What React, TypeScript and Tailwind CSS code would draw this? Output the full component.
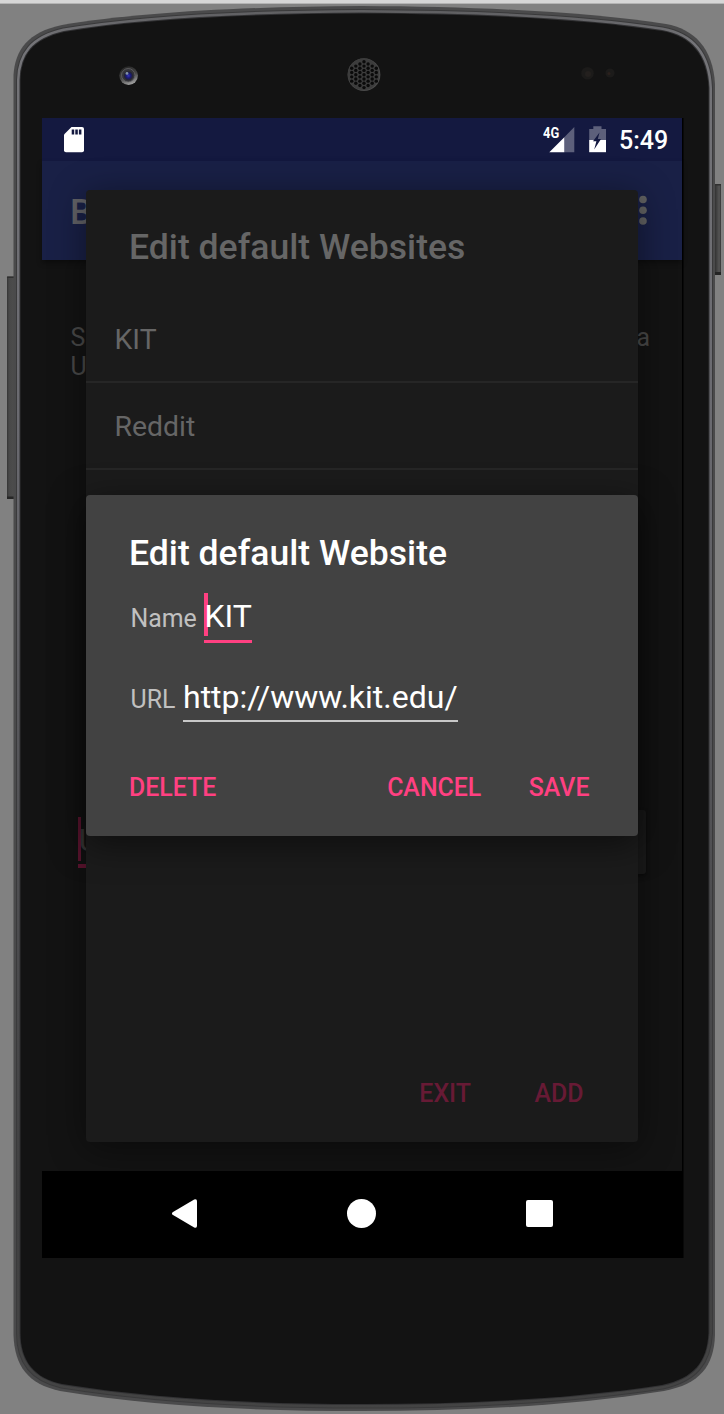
import React from "react";

const HOLES: [number, number][] = [];
for (let r = -3; r <= 3; r++) {
  const n = 7 - Math.abs(r);
  for (let c = 0; c < n; c++) {
    HOLES.push([364 + r * 4.1, 74.7 + (c - (n - 1) / 2) * 4.3]);
  }
}

const OUTLINE =
  "M13.5 75 C15 50 28 32 62 25 C140 12 250 6.5 362 6 C480 6.5 590 12 666 24 C694 29 713 48 715 84 L715 1335 C714 1366 700 1384 664 1391 C570 1406 470 1411 362 1411 C250 1411 150 1406 60 1391 C28 1384 14.5 1366 13.5 1335 Z";
const FACE =
  "M20.5 80 C21 55 33 39 64 32 C140 19 250 14 362 13.5 C480 14 585 19 662 31 C690 36 707 54 708.5 88 L708.5 1333 C707 1362 694 1378 662 1385 C570 1399 470 1404 362 1404 C250 1404 150 1398 62 1384 C34 1378 20.5 1361 20.5 1333 Z";

function PhoneBody() {
  return (
    <svg className="absolute inset-0" width="724" height="1414" viewBox="0 0 724 1414">
      <defs>
        <linearGradient id="key" x1="0" x2="1" y1="0" y2="0">
          <stop offset="0" stopColor="#343434" />
          <stop offset="0.25" stopColor="#484848" />
          <stop offset="1" stopColor="#4e4e4e" />
        </linearGradient>
        <linearGradient id="keyRight" x1="0" x2="1" y1="0" y2="0">
          <stop offset="0" stopColor="#2b2b2b" />
          <stop offset="0.75" stopColor="#555" />
          <stop offset="1" stopColor="#333" />
        </linearGradient>
        <linearGradient id="rim" gradientUnits="userSpaceOnUse" x1="0" x2="0" y1="0" y2="1414">
          <stop offset="0" stopColor="#58585a" />
          <stop offset="0.03" stopColor="#747478" />
          <stop offset="0.3" stopColor="#6a6a70" />
          <stop offset="0.6" stopColor="#505053" />
          <stop offset="0.85" stopColor="#404041" />
          <stop offset="1" stopColor="#444" />
        </linearGradient>
        <linearGradient id="lensRing" x1="0.3" x2="0.7" y1="0" y2="1">
          <stop offset="0" stopColor="#252525" />
          <stop offset="0.5" stopColor="#444" />
          <stop offset="1" stopColor="#aaa" />
        </linearGradient>
        <radialGradient id="lens">
          <stop offset="0" stopColor="#3434b8" />
          <stop offset="0.55" stopColor="#191970" />
          <stop offset="1" stopColor="#252528" />
        </radialGradient>
      </defs>
      <rect x="0" y="0" width="724" height="3" fill="#d6d6d6" />
      <rect x="0" y="3" width="724" height="1" fill="#b4b4b4" />
      <rect x="7" y="276.5" width="8" height="222.5" rx="1" fill="url(#key)" />
      <rect x="7" y="276.5" width="7" height="1.5" fill="#303030" />
      <rect x="7" y="496.5" width="7" height="2.5" fill="#262626" />
      <rect x="714" y="184" width="7" height="91" rx="1" fill="url(#keyRight)" />
      <rect x="714" y="184" width="7" height="1.5" fill="#303030" />
      <rect x="714" y="272" width="7" height="3" fill="#242424" />
      <path d={OUTLINE} fill="#4a4a4b" />
      <path d={FACE} fill="none" stroke="#3a3a3b" strokeWidth="9" />
      <path d={FACE} fill="none" stroke="url(#rim)" strokeWidth="7" />
      <path d={FACE} fill="none" stroke="#323234" strokeWidth="2" />
      <path d={FACE} fill="#131313" />
      <circle cx="128.6" cy="75.6" r="9.3" fill="url(#lensRing)" />
      <circle cx="128.2" cy="75.2" r="6.7" fill="#34343a" stroke="#6a6a6c" strokeWidth="0.7" />
      <circle cx="128.4" cy="75.7" r="4.5" fill="url(#lens)" />
      <circle cx="127" cy="73.4" r="1.4" fill="#8393a6" />
      <circle cx="364" cy="74.7" r="16.4" fill="#4a4a4a" />
      <circle cx="363.5" cy="74.3" r="15.8" fill="#3c3c3c" />
      {HOLES.map(([x, y], i) => (
        <circle key={i} cx={x} cy={y} r="1.7" fill="#0a0a0a" />
      ))}
      <circle cx="587.5" cy="73.3" r="6.3" fill="#1c1b1a" />
      <circle cx="588" cy="74" r="3" fill="#24201e" />
      <circle cx="610" cy="73" r="4.6" fill="#1c1b1a" />
      <circle cx="609" cy="73.5" r="1.5" fill="#2b201d" />
    </svg>
  );
}

function StatusBar() {
  return (
    <div className="flex h-[43px] w-[640px] items-start bg-[#141940] text-white">
      <svg className="ml-[22px] mt-[9px]" width="20" height="26" viewBox="0 0 20 26">
        <path d="M7.5 0 H18 Q20 0 20 2 V23.3 Q20 25.3 18 25.3 H2 Q0 25.3 0 23.3 V7.5 Z" fill="#fff" />
        <path d="M7.7 2.5h2.5v5H7.7z M11.3 2.5h2.5v5h-2.5z M14.9 2.5h2.5v5h-2.5z" fill="#141940" />
      </svg>
      <div className="ml-[458.5px] mt-[6px] flex">
        <span className="w-[15.5px] origin-left scale-x-[0.86] text-[15px] font-bold leading-[18px]">4G</span>
        <svg className="-ml-[9.5px] mt-[3px]" width="26" height="26" viewBox="0 0 26 26">
          <path d="M15.3 10.2 L25.3 0 V25.3 H15.3 Z" fill="#5d607b" />
          <path d="M0.3 25.3 L15.3 10.2 V25.3 Z" fill="#fff" />
        </svg>
      </div>
      <svg className="ml-[14.5px] mt-[8px]" width="17" height="27" viewBox="0 0 17 27">
        <path d="M4.3 0.3 H12.5 V3 H17 V14 H0.2 V3 H4.3 Z" fill="#5d607b" />
        <path d="M0.2 14 H17 V26.2 H0.2 Z" fill="#fff" />
        <path d="M10.5 6.5 L4 15.3 H7.4 L5.2 23.5 L12 13.1 H8.8 Z" fill="#141940" />
      </svg>
      <span className="ml-[13px] mt-[8px] text-[25px] font-medium leading-[30px]">5:49</span>
    </div>
  );
}

function AppBar() {
  return (
    <div className="z-10 flex h-[99px] w-[640px] items-start justify-between bg-[#192046] shadow-[0_3px_5px_rgba(0,0,0,0.35)]">
      <span className="ml-[28px] mt-[30px] text-[35.6px] font-medium leading-[42px] text-[#626266]">B</span>
      <svg className="mr-[35px] mt-[34px]" width="8" height="31" viewBox="0 0 8 31">
        <circle cx="4" cy="4.5" r="3.8" fill="#626262" />
        <circle cx="4" cy="15.2" r="3.8" fill="#626262" />
        <circle cx="4" cy="26" r="3.8" fill="#626262" />
      </svg>
    </div>
  );
}

function MainPage() {
  return (
    <div className="h-[911px] w-[640px] overflow-hidden bg-[#131313] text-[#484848]">
      <div className="flex h-[490px] justify-between px-7 pt-[63px] text-[24.9px] leading-[29px]">
        <p className="ml-[0.5px]">
          S<br />U
        </p>
        <p className="mr-[4px]">a</p>
      </div>
      <div className="flex justify-between pl-[35.7px] pr-9 pt-[60px]">
        <div className="flex h-[58px] w-[50px] flex-col justify-between">
          <div className="mt-[7px] flex h-[44px] border-l-[3px] border-[#641633] text-[32px] leading-[46px] text-[#3c3c3c]">
            <span className="-ml-[2px]">U</span>
          </div>
          <div className="h-1 bg-[#641633]" />
        </div>
        <div className="h-16 w-40 rounded-[3px] bg-[#1c1c1c] shadow-[0_2px_4px_rgba(0,0,0,0.4)]" />
      </div>
    </div>
  );
}

function NavBar() {
  return (
    <div className="relative z-40 flex h-[87px] w-[641.4px] items-start bg-black">
      <svg className="ml-[129px] mt-[28px]" width="27" height="30" viewBox="0 0 27 30">
        <path d="M1.6 13.2 L23.2 0.5 Q26 -0.4 26 2.3 V26.8 Q26 29.5 23.2 28.4 L1.6 15.8 Q0.3 14.5 1.6 13.2 Z" fill="#fff" />
      </svg>
      <div className="ml-[149px] mt-[28px] h-[29px] w-[29px] rounded-full bg-white" />
      <div className="ml-[150px] mt-[29px] h-[27px] w-[27px] rounded-[2px] bg-white" />
    </div>
  );
}

function WebsiteList() {
  return (
    <section className="absolute left-[44px] top-[71.5px] z-20 flex h-[952px] w-[551.5px] flex-col rounded-[4px] bg-[#1b1b1b] text-[#666] shadow-[0_6px_36px_rgba(0,0,0,0.45)]">
      <h2 className="ml-[43px] mt-[36px] h-[72px] text-[35.6px] font-medium leading-[42px]">Edit default Websites</h2>
      <div className="h-[85.5px] border-b-2 border-[#262626] pl-[28.5px] pt-[25px] text-[28.4px] leading-[33px]">KIT</div>
      <div className="h-[87px] border-b-2 border-[#262626] pl-[28.5px] pt-[27px] text-[28.4px] leading-[33px]">Reddit</div>
      <div className="mb-[33.5px] mr-[54px] mt-auto flex justify-end gap-[63.5px] text-[24.9px] font-medium leading-[29px] text-[#671a35]">
        <span>EXIT</span>
        <span>ADD</span>
      </div>
    </section>
  );
}

function EditDialog() {
  return (
    <section className="absolute left-[44px] top-[377px] z-30 flex h-[341px] w-[551.5px] flex-col rounded-[4px] bg-[#424242] text-white shadow-[0_8px_34px_rgba(0,0,0,0.5)]">
      <h2 className="ml-[43px] mt-[37px] h-[61px] text-[35.6px] font-medium leading-[42px]">Edit default Website</h2>
      <div className="ml-[44.5px] flex h-[50px] items-start">
        <span className="mt-[11px] w-[73.5px] text-[24.9px] leading-[30px] text-[#c0c0c0]">Name</span>
        <div className="relative h-[50px] w-[48px] border-b-[3.5px] border-[#ff4081]">
          <div className="absolute left-0 top-0 h-[43px] w-[4px] bg-[#ff4081]" />
          <span className="relative block pl-[0.5px] pt-[4px] text-[32px] leading-[38px]">KIT</span>
        </div>
      </div>
      <div className="ml-[44.5px] mt-[31px] flex h-[48px] items-start">
        <span className="mt-[11px] w-[52.5px] text-[24.9px] leading-[30px] text-[#c0c0c0]">URL</span>
        <div className="h-[48px] w-[275px] border-b-2 border-[#c8c8c8] pt-[4px] text-[32px] leading-[38px]">http://www.kit.edu/</div>
      </div>
      <div className="ml-[43px] mr-[48px] mt-[51px] flex text-[24.9px] font-medium leading-[29px] text-[#ff4081]">
        <span className="mr-auto">DELETE</span>
        <span className="mr-[47.5px]">CANCEL</span>
        <span>SAVE</span>
      </div>
    </section>
  );
}

export default function App() {
  return (
    <main className="relative h-[1414px] w-[724px] overflow-hidden bg-[#818181] pl-[42px] pt-[118px] font-['Roboto',sans-serif]">
      <PhoneBody />
      <div className="relative flex h-[1140px] w-[640px] flex-col whitespace-nowrap shadow-[1.5px_0_0_#000]">
        <StatusBar />
        <AppBar />
        <MainPage />
        <NavBar />
        <WebsiteList />
        <EditDialog />
      </div>
    </main>
  );
}
